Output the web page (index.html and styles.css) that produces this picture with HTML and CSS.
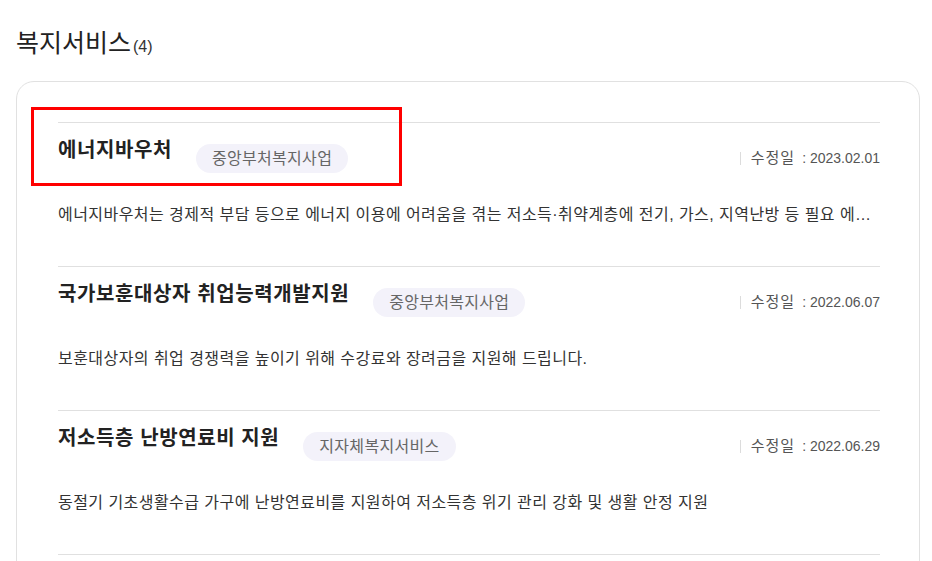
FILE: index.html
```html
<!DOCTYPE html>
<html lang="ko">
<head>
  <meta charset="UTF-8">
  <meta name="viewport" content="width=device-width, initial-scale=1.0">
  <title>복지서비스</title>
  <link rel="stylesheet" href="styles.css">
</head>
<body>
  <div class="page">
    <h2 class="section-title">복지서비스<span class="count">(4)</span></h2>

    <div class="service-box">
      <div class="highlight"></div>

      <div class="service-item">
        <div class="service-head">
          <strong class="service-name">에너지바우처</strong>
          <span class="tag">중앙부처복지사업</span>
          <span class="updated"><span class="label">수정일</span>: 2023.02.01</span>
        </div>
        <p class="service-desc">에너지바우처는 경제적 부담 등으로 에너지 이용에 어려움을 겪는 저소득·취약계층에 전기, 가스, 지역난방 등 필요 에너지를 이용할 수 있도록 에너지바우처(이용권)를 지원하는 제도입니다.</p>
      </div>

      <div class="service-item">
        <div class="service-head">
          <strong class="service-name">국가보훈대상자 취업능력개발지원</strong>
          <span class="tag">중앙부처복지사업</span>
          <span class="updated"><span class="label">수정일</span>: 2022.06.07</span>
        </div>
        <p class="service-desc">보훈대상자의 취업 경쟁력을 높이기 위해 수강료와 장려금을 지원해 드립니다.</p>
      </div>

      <div class="service-item">
        <div class="service-head">
          <strong class="service-name">저소득층 난방연료비 지원</strong>
          <span class="tag">지자체복지서비스</span>
          <span class="updated"><span class="label">수정일</span>: 2022.06.29</span>
        </div>
        <p class="service-desc">동절기 기초생활수급 가구에 난방연료비를 지원하여 저소득층 위기 관리 강화 및 생활 안정 지원</p>
      </div>

      <div class="service-item">
        <div class="service-head">
          <strong class="service-name">긴급복지 연료비 지원</strong>
          <span class="tag">중앙부처복지사업</span>
          <span class="updated"><span class="label">수정일</span>: 2022.03.15</span>
        </div>
        <p class="service-desc">위기상황에 처한 가구에 동절기 연료비를 지원하여 생계 안정을 돕습니다.</p>
      </div>
    </div>
  </div>
</body>
</html>
```

FILE: styles.css
```css
body { margin: 0; padding: 0; background: #fff; color: #222; font-family: "Liberation Sans", "Noto Sans CJK KR", sans-serif; }
.page { padding: 27px 0 40px 16px; width: 904px; }

.section-title { margin: 0 0 22px 0; height: 32px; font-size: 25px; line-height: 32px; font-weight: 400; color: #222; }
.section-title .count { font-size: 16px; line-height: 1; margin-left: 2px; color: #333; }

.service-box { position: relative; border: 1px solid #e1e1e1; border-radius: 18px; padding: 40px 39px 0 41px; }
.highlight { position: absolute; left: 14px; top: 25px; width: 371px; height: 79px; box-sizing: border-box; border: 3px solid #ff0000; }

.service-item { border-top: 1px solid #e0e0e0; padding: 15px 0 39px; }
.service-head { display: flex; align-items: flex-start; height: 35px; }
.service-name { margin-top: -2px; font-size: 20px; line-height: 28px; font-weight: 700; color: #222; letter-spacing: 0.6px; }
.tag { margin: 6px 0 0 24px; padding: 0 16px; height: 29px; line-height: 29px; font-size: 16px; letter-spacing: 0.3px; color: #666; background: #f3f2fa; border-radius: 15px; white-space: nowrap; }
.updated { margin: 6px 0 0 auto; padding-left: 11px; position: relative; font-size: 14px; line-height: 28px; color: #555; white-space: nowrap; }
.updated::before { content: ""; position: absolute; left: 0; top: 8px; width: 1px; height: 13px; background: #dcdcdc; }
.updated .label { margin-right: 7px; font-size: 15px; letter-spacing: 1px; }

.service-desc { margin: 30px 0 0; font-size: 16px; letter-spacing: 0.45px; line-height: 24px; color: #333; white-space: nowrap; overflow: hidden; text-overflow: ellipsis; }
```
